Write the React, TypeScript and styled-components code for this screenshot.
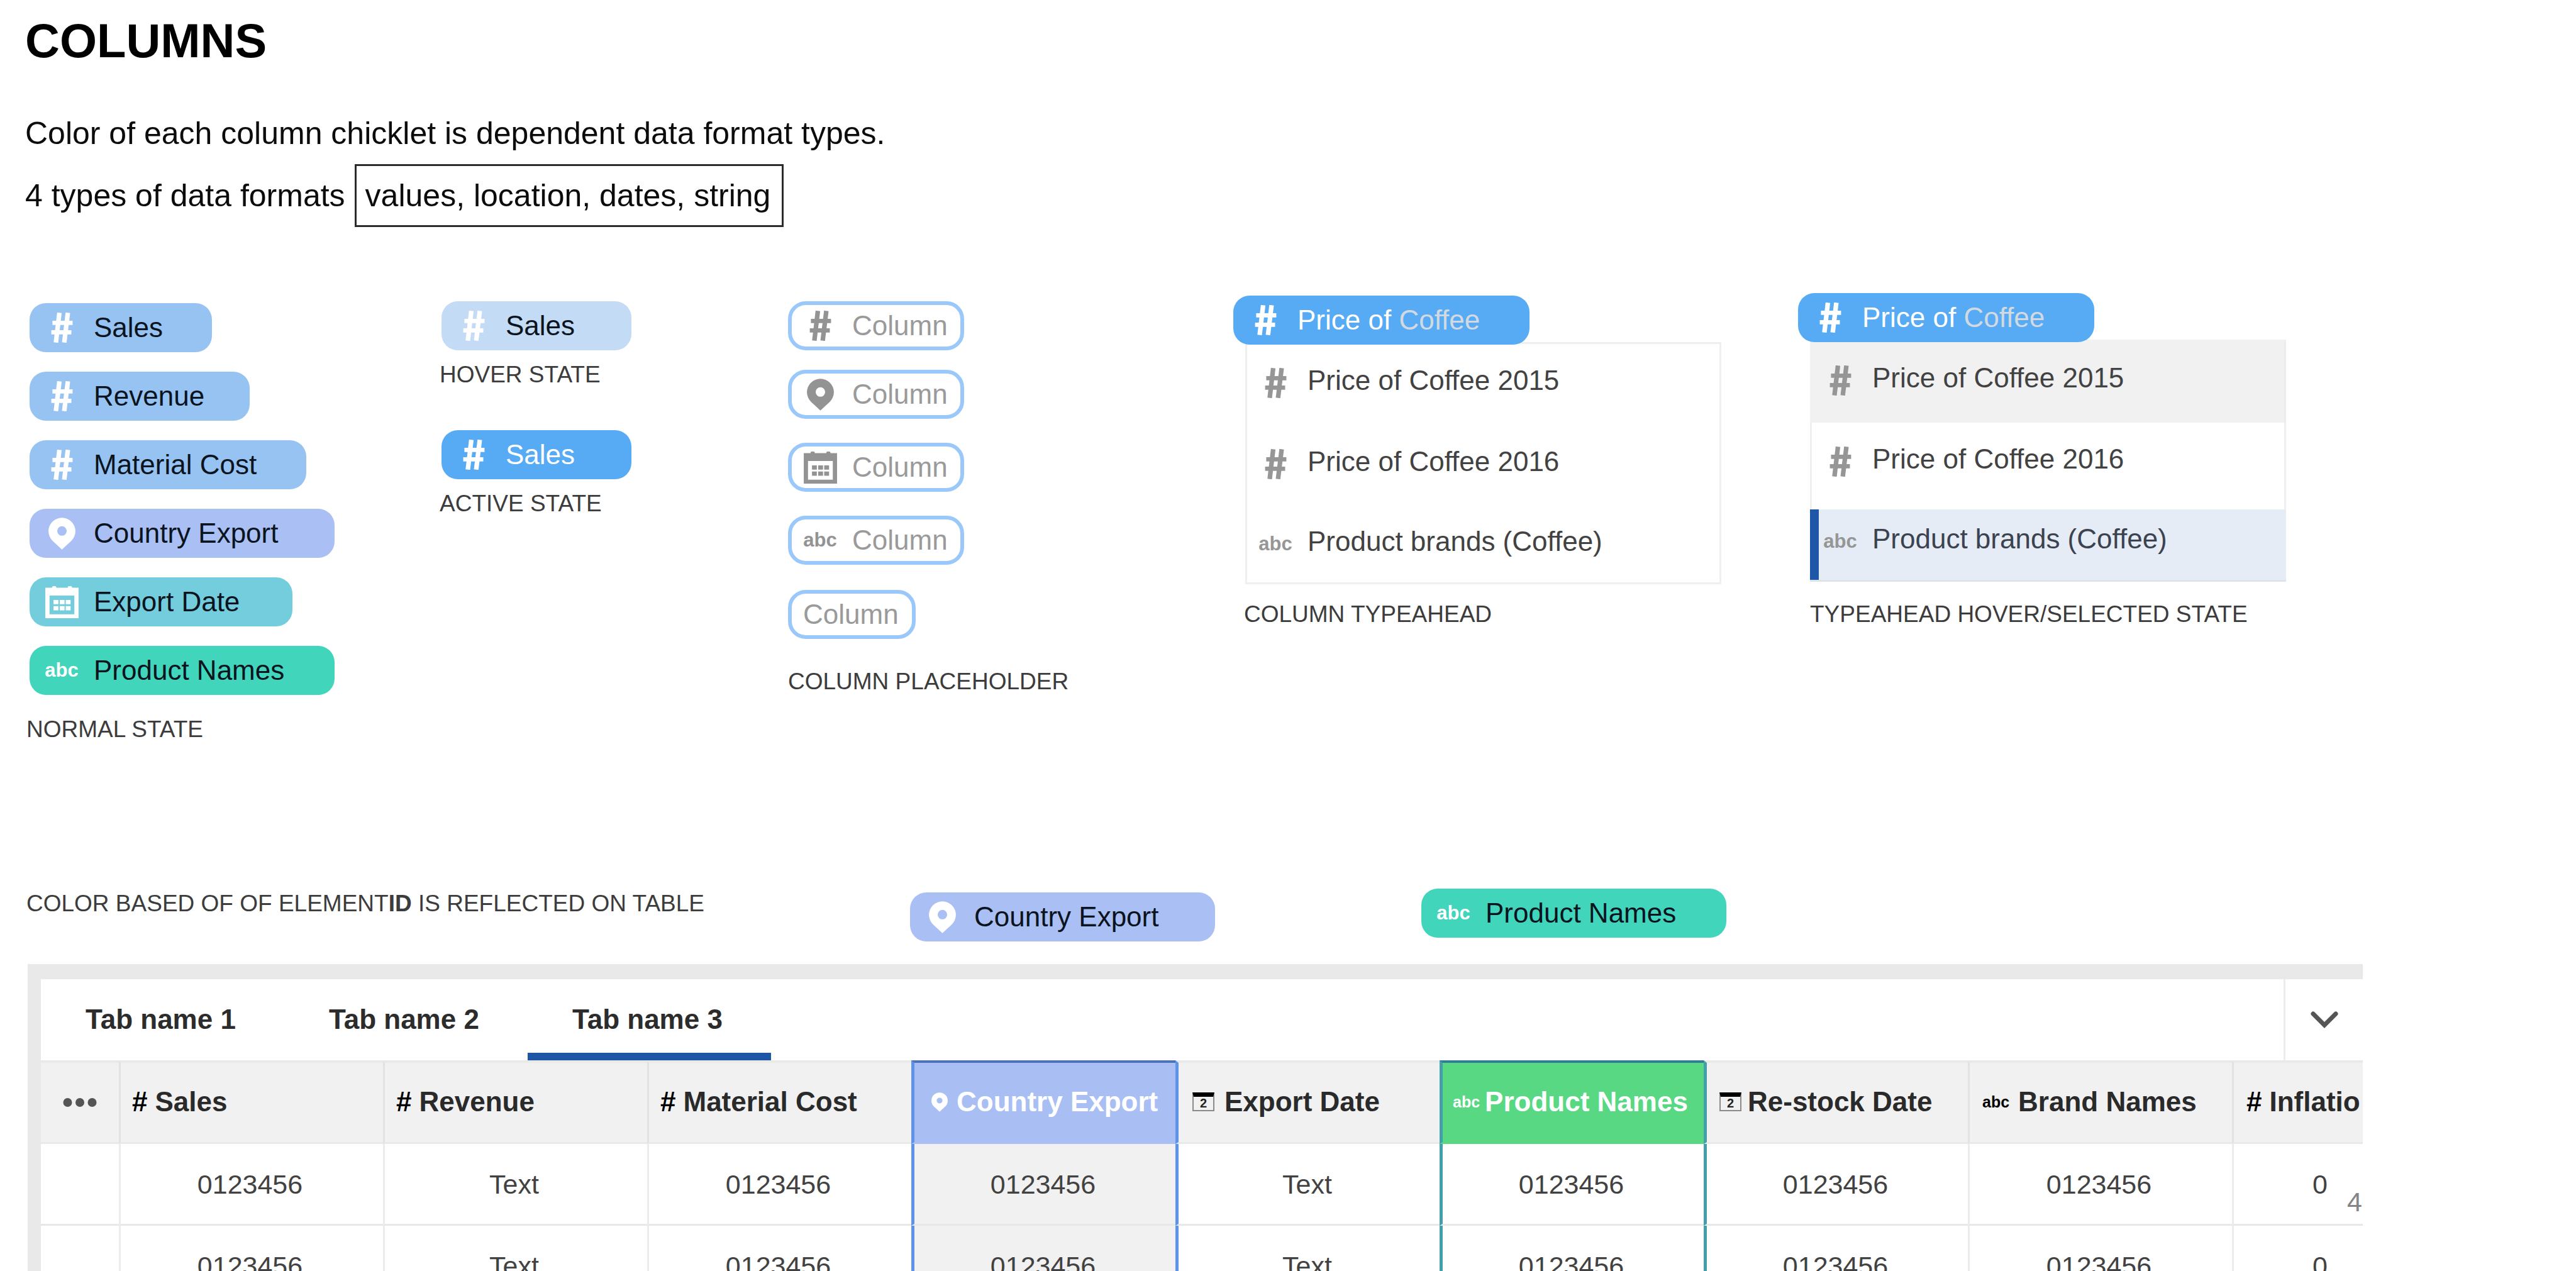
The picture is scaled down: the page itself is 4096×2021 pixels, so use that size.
import React from 'react';
import styled, { createGlobalStyle, css } from 'styled-components';

const GlobalStyle = createGlobalStyle`
  *, *::before, *::after { box-sizing: border-box; }
  html, body { margin: 0; padding: 0; background: #fff; }
  body { overflow: hidden; font-family: "Liberation Sans", Arial, Helvetica, sans-serif; color: #0c0c0c; }
  h1, p, ul { margin: 0; padding: 0; }
  button { font: inherit; border: 0; padding: 0; background: none; text-align: left; cursor: pointer; }
`;

type Kind = 'number' | 'place' | 'date' | 'text';

const tint = {
  number: '#97c3f2',
  numberHover: '#c3dbf4',
  numberActive: '#57abf4',
  place: '#aabff3',
  date: '#73cddd',
  text: '#41d5bb',
};

/* ---------- icons ---------- */

const HashIcon = () => (
  <svg width="35" height="48" viewBox="0 0 36 50" fill="none" stroke="currentColor" strokeLinecap="butt" aria-hidden="true">
    <path d="M13.8 0.3 8 49.7M27.8 0.3 21.8 49.7" strokeWidth="7.6" />
    <path d="M2.3 17H35.6M0.4 32.6H33.6" strokeWidth="7" />
  </svg>
);

const PinIcon = ({ small = false }: { small?: boolean }) => (
  <svg width={small ? 26 : 43} height={small ? 31 : 51} viewBox="0 0 45 53" fill="currentColor" aria-hidden="true">
    <path
      fillRule="evenodd"
      d="M22.5 53 7.2 38.8A22.4 22.4 0 1 1 37.8 38.8ZM22.5 14.2a7.9 7.9 0 1 0 0 15.8 7.9 7.9 0 0 0 0-15.8Z"
    />
  </svg>
);

const CalendarIcon = () => (
  <svg width="53" height="51" viewBox="0 0 55 53" fill="currentColor" aria-hidden="true">
    <path fillRule="evenodd" d="M0 2.7H11.2V2a2 2 0 0 1 2-2h3a2 2 0 0 1 2 2v.7H37.2V2a2 2 0 0 1 2-2h3a2 2 0 0 1 2 2v.7H55V53H0ZM7 15.6V46.4H48V15.6Z" />
    <path d="M13.6 22.8h8v7h-8zM23.8 22.8h8v7h-8zM33.8 22.8h8v7h-8zM13.6 33h8v7h-8zM23.8 33h8v7h-8zM33.8 33h8v7h-8z" />
  </svg>
);

const ChevronIcon = () => (
  <svg width="44" height="28" viewBox="0 0 44 28" fill="none" stroke="#555" strokeWidth="7" strokeLinecap="round" aria-hidden="true">
    <path d="M4 4 22 22 40 4" />
  </svg>
);

const DotsIcon = () => (
  <svg width="54" height="16" viewBox="0 0 54 16" fill="#555" aria-hidden="true">
    <circle cx="7.5" cy="8" r="7" />
    <circle cx="27" cy="8" r="7" />
    <circle cx="46.5" cy="8" r="7" />
  </svg>
);

const Abc = styled.span<{ $small?: boolean }>`
  font-weight: 700;
  font-size: ${p => (p.$small ? 25 : 31)}px;
  line-height: 32px;
`;

const DayBadge = styled.span`
  display: block;
  width: 35px;
  height: 30px;
  border: 2px solid #8a8a8a;
  border-top: 7px solid #000;
  font-size: 20px;
  font-weight: 700;
  line-height: 21px;
  text-align: center;
  color: #222;
`;

const KindIcon = ({ kind }: { kind: Kind }) => {
  if (kind === 'number') return <HashIcon />;
  if (kind === 'place') return <PinIcon />;
  if (kind === 'date') return <CalendarIcon />;
  return <Abc>abc</Abc>;
};

/* ---------- page ---------- */

const Page = styled.main`
  height: 100vh;
  overflow: hidden;
  background: #fff;
`;

const Intro = styled.header`
  padding: 21px 0 0 40px;
  font-size: 50px;
  line-height: 60px;
`;

const Title = styled.h1`
  margin-bottom: 73px;
  font-size: 76px;
  line-height: 88px;
  color: #000;
`;

const FormatLine = styled.p`
  display: flex;
  align-items: center;
  gap: 15px;
  margin-top: 19px;
`;

const FormatBox = styled.span`
  padding: 17px 18px 17px 14px;
  border: 3px solid #2b2b2b;
`;

const Specimens = styled.section`
  display: grid;
  grid-template-columns: 657fr 554fr 708fr 898fr 1237fr;
  align-items: start;
  padding: 105px 0 0 42px;
`;

const Specimen = styled.div<{ $top?: number }>`
  display: flex;
  flex-direction: column;
  align-items: flex-start;
  padding-top: ${p => p.$top ?? 0}px;
`;

const ChipList = styled.div<{ $gap?: number; $indent?: number; $before?: number }>`
  display: flex;
  flex-direction: column;
  align-items: flex-start;
  gap: ${p => p.$gap ?? 0}px;
  margin-top: ${p => p.$before ?? 0}px;
  margin-left: ${p => p.$indent ?? 0}px;
`;

const Caption = styled.p<{ $gap?: number; $indent?: number }>`
  margin-top: ${p => p.$gap ?? 0}px;
  margin-left: ${p => p.$indent ?? 0}px;
  font-size: 37px;
  line-height: 44px;
  color: #3c3c3c;
`;

const ChipButton = styled.button<{ $width: number; $bg: string; $light?: boolean; $raised?: boolean }>`
  display: flex;
  align-items: center;
  gap: 24px;
  width: ${p => p.$width}px;
  height: 78px;
  padding-left: 24px;
  border-radius: 26px;
  background: ${p => p.$bg};
  color: ${p => (p.$light ? '#fff' : '#0a141e')};
  font-size: 44px;
  line-height: 54px;
  white-space: nowrap;
  ${p => p.$raised && css`position: relative; z-index: 1;`}
`;

const ChipIcon = styled.span<{ $color?: string }>`
  display: flex;
  flex: none;
  align-items: center;
  justify-content: center;
  width: 54px;
  color: ${p => p.$color ?? '#fff'};
`;

const Faded = styled.span`
  color: #d2d9e0;
`;

const PlaceholderButton = styled(ChipButton)<{ $gap: number }>`
  margin-top: ${p => p.$gap}px;
  padding-left: 18px;
  border: 6px solid #9ac8fa;
  border-radius: 28px;
  color: #9a9a9a;
`;

const Options = styled.ul`
  width: 757px;
  margin: -4px 0 0 19px;
  padding: 3px 0;
  box-shadow: inset 0 0 0 3px #efefef;
  list-style: none;
`;

const optionShape = {
  top: css`height: 129px; padding-bottom: 14px;`,
  middle: css`height: 138px; padding-bottom: 22px;`,
  bottom: css`height: 112px; padding-bottom: 18px;`,
};

const Option = styled.li<{ $slot: 'top' | 'middle' | 'bottom'; $state?: 'hover' | 'selected' }>`
  display: flex;
  align-items: center;
  gap: 24px;
  padding-left: 21px;
  ${p => optionShape[p.$slot]}
  font-size: 44px;
  line-height: 54px;
  color: #424242;
  ${p => p.$state === 'hover' && css`
    background: #f1f1f1;
    box-shadow: 0 -3px 0 #f1f1f1, inset -3px 0 0 #ececec;
  `}
  ${p => p.$state === 'selected' && css`
    padding-left: 7px;
    border-left: 14px solid #1f57a8;
    background: #e6ecf5;
    color: #3b4250;
    box-shadow: 0 3px 0 #dee4ec;
  `}
`;

const OptionIcon = styled(ChipIcon)`
  margin-top: 8px;
`;

/* ---------- table ---------- */

const TableIntro = styled.section`
  display: grid;
  grid-template-columns: 1405fr 813fr 1836fr;
  align-items: start;
  padding: 231px 0 0 42px;
`;

const TableIntroCell = styled.div<{ $top?: number }>`
  padding-top: ${p => p.$top ?? 0}px;
`;

const Frame = styled.section`
  margin: 36px 339px 0 44px;
  border-top: 24px solid #e9e9e9;
  border-left: 21px solid #e9e9e9;
  overflow: hidden;
`;

const TabBar = styled.div`
  display: flex;
  height: 129px;
`;

const Tab = styled.button`
  width: 387px;
  padding: 0 6px 2px 0;
  font-size: 44px;
  font-weight: 700;
  text-align: center;
  color: #2c2c2c;

  &[aria-selected='true'] {
    box-shadow: inset 0 -12px 0 #1f55a5;
  }
`;

const CollapseButton = styled.button`
  display: flex;
  align-items: center;
  justify-content: center;
  width: 126px;
  margin-left: auto;
  border-left: 3px solid #ececec;
`;

const Grid = styled.table`
  width: calc(100% + 212px);
  table-layout: fixed;
  border-collapse: separate;
  border-spacing: 0;
  font-size: 44px;
  line-height: 54px;
`;

const MenuCol = styled.col`
  width: 124px;
`;

const HeadCell = styled.th<{ $edge?: string; $top?: string; $bg?: string; $pad?: number }>`
  height: 133px;
  padding: 0 0 2px ${p => p.$pad ?? 18}px;
  border-left: ${p => (p.$edge ? `5px solid ${p.$edge}` : '3px solid #e2e2e2')};
  border-top: 4px solid ${p => p.$top ?? '#e9e9e9'};
  border-bottom: 3px solid ${p => p.$bg ?? '#e9e9e9'};
  background: ${p => p.$bg ?? '#f1f1f1'};
  color: ${p => (p.$bg ? '#fff' : '#2a2a2a')};
  font-weight: 700;
  text-align: left;
  white-space: nowrap;
`;

const HeadLabel = styled.span<{ $gap: number }>`
  display: flex;
  align-items: center;
  gap: ${p => p.$gap}px;
`;

const HeadMark = styled.span<{ $light?: boolean }>`
  display: flex;
  flex: none;
  color: ${p => (p.$light ? '#fff' : '#000')};
`;

const MenuHead = styled.th`
  padding: 0;
  border-top: 4px solid #e9e9e9;
  border-bottom: 3px solid #e9e9e9;
  background: #f1f1f1;
`;

const MenuButton = styled.button`
  display: flex;
  justify-content: center;
  width: 100%;
`;

const Cell = styled.td<{ $edge?: string; $shaded?: boolean }>`
  height: 130px;
  padding: 0 6px 0 0;
  border-left: ${p => (p.$edge ? `5px solid ${p.$edge}` : '3px solid #ececec')};
  border-bottom: 3px solid #e8e8e8;
  background: ${p => (p.$shaded ? '#f1f1f1' : '#fff')};
  color: #424242;
  font-size: 43px;
  text-align: center;
`;

const MenuCell = styled(Cell)`
  border-left: 0;
`;

const CutCell = styled(Cell)`
  position: relative;
  padding-left: 125px;
  text-align: left;
`;

const Stray = styled.span`
  position: absolute;
  top: 65px;
  left: 180px;
  color: #858585;
`;

const BLUE_EDGE = '#5f93ea';
const TEAL_EDGE = '#43a0aa';

interface Column {
  name: string;
  mark: React.ReactNode;
  value: string;
  pad?: number;
  gap?: number;
  bg?: string;
  top?: string;
  edge?: string;
  shaded?: boolean;
}

const columns: Column[] = [
  { name: 'Sales', mark: '#', value: '0123456' },
  { name: 'Revenue', mark: '#', value: 'Text' },
  { name: 'Material Cost', mark: '#', value: '0123456' },
  { name: 'Country Export', mark: <PinIcon small />, value: '0123456', pad: 27, gap: 14, bg: '#a9bff3', top: '#4c72b8', edge: BLUE_EDGE, shaded: true },
  { name: 'Export Date', mark: <DayBadge>2</DayBadge>, value: 'Text', pad: 22, gap: 16, edge: BLUE_EDGE },
  { name: 'Product Names', mark: <Abc $small>abc</Abc>, value: '0123456', pad: 16, gap: 8, bg: '#59d884', top: '#2f7f90', edge: TEAL_EDGE },
  { name: 'Re-stock Date', mark: <DayBadge>2</DayBadge>, value: '0123456', pad: 20, gap: 10, edge: TEAL_EDGE },
  { name: 'Brand Names', mark: <Abc $small>abc</Abc>, value: '0123456', pad: 20, gap: 14 },
];

const normalChips: { kind: Kind; label: string; width: number }[] = [
  { kind: 'number', label: 'Sales', width: 290 },
  { kind: 'number', label: 'Revenue', width: 350 },
  { kind: 'number', label: 'Material Cost', width: 440 },
  { kind: 'place', label: 'Country Export', width: 485 },
  { kind: 'date', label: 'Export Date', width: 418 },
  { kind: 'text', label: 'Product Names', width: 485 },
];

const placeholders: { kind: Kind; gap: number }[] = [
  { kind: 'number', gap: 0 },
  { kind: 'place', gap: 31 },
  { kind: 'date', gap: 38 },
  { kind: 'text', gap: 38 },
];

interface ChipProps {
  kind: Kind;
  width: number;
  bg?: string;
  light?: boolean;
  raised?: boolean;
  children: React.ReactNode;
}

const Chip = ({ kind, width, bg, light, raised, children }: ChipProps) => (
  <ChipButton type="button" $width={width} $bg={bg ?? tint[kind]} $light={light} $raised={raised}>
    <ChipIcon><KindIcon kind={kind} /></ChipIcon>
    <span>{children}</span>
  </ChipButton>
);

const Typeahead = ({ marked = false }: { marked?: boolean }) => (
  <>
    <Chip kind="number" width={471} bg={tint.numberActive} light raised>
      Price of <Faded>Coffee</Faded>
    </Chip>
    <Options role="listbox" aria-label="Matching columns">
      <Option role="option" $slot="top" $state={marked ? 'hover' : undefined}>
        <OptionIcon $color="#969696"><HashIcon /></OptionIcon>
        Price of Coffee 2015
      </Option>
      <Option role="option" $slot="middle">
        <OptionIcon $color="#969696"><HashIcon /></OptionIcon>
        Price of Coffee 2016
      </Option>
      <Option role="option" aria-selected={marked} $slot="bottom" $state={marked ? 'selected' : undefined}>
        <OptionIcon $color="#969696"><Abc>abc</Abc></OptionIcon>
        Product brands (Coffee)
      </Option>
    </Options>
  </>
);

const Row = ({ stray }: { stray?: string }) => (
  <tr>
    <MenuCell />
    {columns.map(c => (
      <Cell key={c.name} $edge={c.edge} $shaded={c.shaded}>{c.value}</Cell>
    ))}
    <CutCell>
      0{stray && <Stray>{stray}</Stray>}
    </CutCell>
  </tr>
);

export default function App() {
  return (
    <Page>
      <GlobalStyle />
      <Intro>
        <Title>COLUMNS</Title>
        <p>Color of each column chicklet is dependent data format types.</p>
        <FormatLine>
          <span>4 types of data formats</span>
          <FormatBox>values, location, dates, string</FormatBox>
        </FormatLine>
      </Intro>

      <Specimens>
        <Specimen $top={16}>
          <ChipList $gap={31} $indent={5}>
            {normalChips.map(c => (
              <Chip key={c.label} kind={c.kind} width={c.width}>{c.label}</Chip>
            ))}
          </ChipList>
          <Caption $gap={33}>NORMAL STATE</Caption>
        </Specimen>

        <Specimen $top={13}>
          <ChipList $indent={3}>
            <Chip kind="number" width={302} bg={tint.numberHover}>Sales</Chip>
          </ChipList>
          <Caption $gap={17}>HOVER STATE</Caption>
          <ChipList $indent={3} $before={66}>
            <Chip kind="number" width={302} bg={tint.numberActive} light>Sales</Chip>
          </ChipList>
          <Caption $gap={17}>ACTIVE STATE</Caption>
        </Specimen>

        <Specimen $top={13}>
          {placeholders.map(p => (
            <PlaceholderButton key={p.kind} type="button" $width={280} $bg="#fff" $gap={p.gap}>
              <ChipIcon $color="#939393"><KindIcon kind={p.kind} /></ChipIcon>
              <span>Column</span>
            </PlaceholderButton>
          ))}
          <PlaceholderButton type="button" $width={203} $bg="#fff" $gap={40}>Column</PlaceholderButton>
          <Caption $gap={46}>COLUMN PLACEHOLDER</Caption>
        </Specimen>

        <Specimen $top={4}>
          <Typeahead />
          <Caption $gap={26} $indent={17}>COLUMN TYPEAHEAD</Caption>
        </Specimen>

        <Specimen>
          <Typeahead marked />
          <Caption $gap={30} $indent={19}>TYPEAHEAD HOVER/SELECTED STATE</Caption>
        </Specimen>
      </Specimens>

      <TableIntro>
        <TableIntroCell $top={2}>
          <Caption>COLOR BASED OF OF ELEMENT<b>ID</b> IS REFLECTED ON TABLE</Caption>
        </TableIntroCell>
        <TableIntroCell $top={6}>
          <Chip kind="place" width={485}>Country Export</Chip>
        </TableIntroCell>
        <TableIntroCell>
          <Chip kind="text" width={485}>Product Names</Chip>
        </TableIntroCell>
      </TableIntro>

      <Frame>
        <TabBar role="tablist">
          <Tab type="button" role="tab" aria-selected="false">Tab name 1</Tab>
          <Tab type="button" role="tab" aria-selected="false">Tab name 2</Tab>
          <Tab type="button" role="tab" aria-selected="true">Tab name 3</Tab>
          <CollapseButton type="button" aria-label="Collapse"><ChevronIcon /></CollapseButton>
        </TabBar>
        <Grid>
          <colgroup>
            <MenuCol />
            {columns.map(c => <col key={c.name} />)}
            <col />
          </colgroup>
          <thead>
            <tr>
              <MenuHead>
                <MenuButton type="button" aria-label="Table menu"><DotsIcon /></MenuButton>
              </MenuHead>
              {columns.map(c => (
                <HeadCell key={c.name} scope="col" $edge={c.edge} $top={c.top} $bg={c.bg} $pad={c.pad}>
                  <HeadLabel $gap={c.gap ?? 12}>
                    <HeadMark $light={Boolean(c.bg)}>{c.mark}</HeadMark>
                    {c.name}
                  </HeadLabel>
                </HeadCell>
              ))}
              <HeadCell scope="col" $pad={20}>
                <HeadLabel $gap={12}><HeadMark>#</HeadMark>Inflatio</HeadLabel>
              </HeadCell>
            </tr>
          </thead>
          <tbody>
            <Row stray="4" />
            <Row />
          </tbody>
        </Grid>
      </Frame>
    </Page>
  );
}
